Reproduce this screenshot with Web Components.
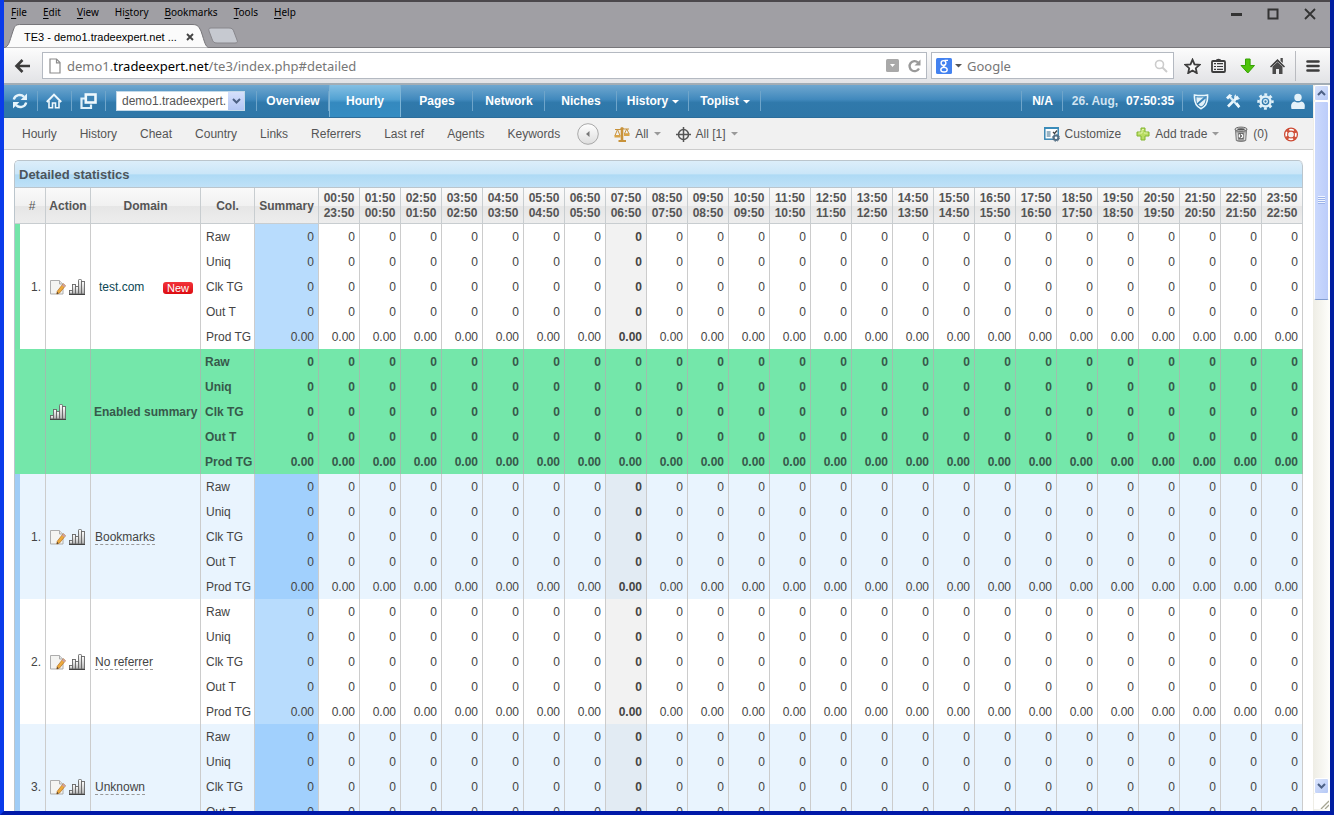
<!DOCTYPE html>
<html lang="en">
<head>
<meta charset="utf-8">
<title>TE3 - demo1.tradeexpert.net</title>
<style>
html, body { margin: 0; height: 100%; }
body { font: 12px/15px "Liberation Sans", Arial, sans-serif; color: #444; overflow: hidden; }
</style>
</head>
<body>
<browser-window>
  <title-bar slot="chrome"></title-bar>
  <location-bar slot="chrome"></location-bar>
  <main-nav></main-nav>
  <sub-nav></sub-nav>
  <stats-panel heading="Detailed statistics"><stats-table></stats-table></stats-panel>
</browser-window>

<script>
const define = (name, html, setup) => customElements.define(name, class extends HTMLElement {
  connectedCallback() {
    if (this.shadowRoot) return;
    const root = this.attachShadow({ mode: "open" });
    root.innerHTML = typeof html === "function" ? html(this) : html;
    if (setup) setup(root, this);
  }
});

/* Icon set: [width, height, markup] */
const ICONS = {
  refresh: [16, 16, `<g fill="none" stroke="#e6f4fb" stroke-width="2.400"><path d="M1.800 6.500C3 1.500 9 .8 12 3.800"/><path d="M14.200 9.500C13 14.500 7 15.200 4 12.200"/></g><path d="M15 .6v6.400H8.600zM1 15.400V9h6.400z" fill="#e6f4fb"/>`],
  house: [16, 16, `<path d="M.8 9 8 1.600 15.200 9" fill="none" stroke="#eef8fd" stroke-width="2"/><path d="M3 8v6.800h3.500V10h3v4.800H13V8" fill="none" stroke="#eef8fd" stroke-width="1.600"/>`],
  windows: [17, 16, `<path d="M6 5.500H1.500V15H11v-3.500" fill="none" stroke="#dff1fa" stroke-width="2.200"/><rect x="5.800" y="1.500" width="9.700" height="8" fill="#3d83b4" stroke="#eef8fd" stroke-width="2.600"/>`],
  shield: [16, 17, `<path d="M1.500 2C5 2.600 11 2.600 14.500 2c.5 6.500-1 11.500-6.500 13.700C2.500 13.500 1 8.500 1.500 2z" fill="none" stroke="#e9f6fc" stroke-width="1.600"/><path d="M3.500 4.300c2.500.3 5 .3 7.200 0L3.900 10.500C3.500 8.500 3.400 6.500 3.500 4.300zM12.600 5.500C12.500 9 11.500 12 8 13.600 6.800 13 6 12.300 5.300 11.500z" fill="#e1f0f8"/>`],
  tools: [16, 16, `<path d="M3 13.500 13 3.500" stroke="#edf8fd" stroke-width="2.600"/><path d="M4 3l9.500 10.500" stroke="#d6ebf6" stroke-width="2.200" fill="none"/><path d="M1 4.500 4.500 1l2.800 1.600L3 6.600zM11 1.300c-2 1-2.400 3.200-1 4.600s4 1 5-1l-2.600.4-1.600-1.500zM10.500 11l1.800-1.800 3 4-2 2z" fill="#edf8fd"/>`],
  gear: [17, 17, `<circle cx="8.500" cy="8.500" r="7" fill="none" stroke="#e0f1f9" stroke-width="2.400" stroke-dasharray="2.900 2.598" stroke-dashoffset="1.450"/><circle cx="8.500" cy="8.500" r="5" fill="none" stroke="#e0f1f9" stroke-width="2.400"/><circle cx="8.500" cy="8.500" r="1.800" fill="none" stroke="#e0f1f9" stroke-width="1.300"/>`],
  person: [16, 17, `<circle cx="8" cy="4.400" r="3.700" fill="#e4f2f9"/><path d="M1.500 16C.4 11 2 9.200 4.700 8.500c1.900 1.400 4.700 1.400 6.600 0C14 9.200 15.600 11 14.500 16z" fill="#e4f2f9"/>`],
  scales: [16, 16, `<g fill="none" stroke="#c8923a"><path d="M8 1.500V14" stroke-width="2.600"/><path d="M1 3.500h5.500l1-1.500h1l1 1h5.500" stroke-width="1.200"/><path d="M3.500 3.500 1 9.500h5zM12.700 3l-2.400 5h4.800z"/><path d="M4.500 15h7.500" stroke-width="2"/></g><path d="M.5 9h6v2.500h-6zM10 7.500h5.500V10H10z" fill="#d8a347"/>`],
  target: [15, 15, `<g fill="none" stroke="#555" stroke-width="1.500"><circle cx="7.500" cy="7.500" r="5"/><path d="M7.500 0v15M0 7.500h15"/></g>`],
  back: [22, 22, `<defs><linearGradient id="g" x2="0" y2="1"><stop stop-color="#fff"/><stop offset="1" stop-color="#ddd"/></linearGradient></defs><circle cx="11" cy="11" r="10.300" fill="url(#g)" stroke="#a9a9a9"/><path d="M12.500 8v6l-3.500-3z" fill="#777"/>`],
  customize: [16, 16, `<rect x=".8" y="1.800" width="13.400" height="11.400" fill="#fff" stroke="#2f7fae" stroke-width="1.400"/><path d="M0 1h15v2H0z" fill="#3a8cba"/><path d="M2.500 5h4.500v6H2.500z" fill="#c3d4df"/><path d="M3 6h3M3 8h3M3 10h3" stroke="#7394a8"/><path d="m9 6 1.500 1.500L13 4.500" fill="none" stroke="#444" stroke-width="1.300"/><circle cx="12" cy="11.800" r="2.300" fill="#fff" stroke="#557186" stroke-width="2"/><circle cx="12" cy="11.800" r="3.500" fill="none" stroke="#557186" stroke-dasharray="1.400 1.350"/>`],
  plus: [14, 14, `<path d="M5 1h4v4h4v4H9v4H5V9H1V5h4z" fill="#b9dd62" stroke="#82b52e"/><path d="M6 2.500h2M2.500 6H6V3M8 6h3.500" fill="none" stroke="#e3f5ad"/>`],
  trash: [14, 16, `<path d="M1.500 3.500h11l-.8 11c-2 1.200-7.400 1.200-9.400 0z" fill="#9d9d9d" stroke="#777"/><path d="M3 6.500l.5 7.500M11 6.500l-.5 7.500" stroke="#d8d8d8" stroke-width="1.200"/><ellipse cx="7" cy="3.200" rx="6" ry="2.100" fill="#ddd" stroke="#666"/><ellipse cx="7" cy="3.200" rx="3.800" ry="1" fill="#555"/><path d="M4.500 7h5v6h-5z" fill="#666"/><circle cx="7" cy="10" r="1.700" fill="none" stroke="#fff" stroke-width="1.200" stroke-dasharray="2.700 .86"/>`],
  lifebuoy: [16, 16, `<circle cx="8" cy="8.500" r="4.900" fill="none" stroke="#fff" stroke-width="3.400"/><circle cx="8" cy="8.500" r="4.900" fill="none" stroke="#d4553c" stroke-width="3" stroke-dasharray="3 4.697" stroke-dashoffset="-2.350"/><circle cx="8" cy="8.500" r="6.400" fill="none" stroke="#cc4b35" stroke-width="1.300"/><circle cx="8" cy="8.500" r="3.400" fill="none" stroke="#cc4b35" stroke-width="1.100"/>`],
  arrowLeft: [17, 14, `<path d="M16 7H3M8.500 1 2.500 7l6 6" fill="none" stroke="#3c3c3c" stroke-width="2.600"/>`],
  page: [12, 16, `<path d="M1 1h6.500L11 4.500V15H1z" fill="#fff" stroke="#8b8b8b" stroke-width="1.200"/><path d="M7.500 1v3.800H11" fill="none" stroke="#8b8b8b" stroke-width="1.200"/>`],
  drop: [13, 13, `<rect width="13" height="13" rx="1.500" fill="#a9a9a9"/><path d="M4 5h5l-2.500 3z" fill="#fff"/>`],
  reload: [15, 14, `<path d="M12 9.500A5 5 0 1 1 11 3.500" fill="none" stroke="#999" stroke-width="2.300"/><path d="M13.500.5v6h-6z" fill="#999"/>`],
  engine: [16, 16, `<rect width="16" height="16" rx="1.500" fill="#4382f0"/><g fill="none" stroke="#fff" stroke-width="1.400"><circle cx="7.500" cy="5" r="2.400"/><ellipse cx="8" cy="11.700" rx="3.200" ry="2.300"/><path d="M8.500 2.400H12M9 7c-2.600.7-2.300 1.700.2 2.400"/></g>`],
  lens: [14, 14, `<circle cx="5.500" cy="5.500" r="4" fill="none" stroke="#ccc" stroke-width="1.600"/><path d="m8.500 8.500 4.500 4.500" stroke="#ccc" stroke-width="2"/>`],
  star: [17, 16, `<path d="m8.500 1.700 2 4.600 5 .5-3.700 3.400 1 4.900-4.300-2.600-4.300 2.600 1-4.900L1.500 6.800l5-.5z" fill="#f8f8f8" stroke="#3d3d3d" stroke-width="1.800"/>`],
  clipboard: [15, 15, `<rect x="1" y="3" width="13" height="11" rx="1" fill="none" stroke="#3d3d3d" stroke-width="1.800"/><path d="M4.500 3C5 0 10 0 10.500 3z" fill="#3d3d3d"/><path d="M3 5.700h2M6 5.700h6M3 8.500h2M6 8.500h6M3 11.300h2M6 11.300h6" stroke="#3d3d3d" stroke-width="1.200"/>`],
  download: [16, 16, `<path d="M5.500 1h4.600v6.500h4.400L7.800 15 1 7.500h4.500z" fill="#4fc40b" stroke="#36a006"/>`],
  home: [15, 16, `<path d="M0 8.500 7.500 1 15 8.500l-1 1L7.500 3.500 1 9.500z" fill="#3d3d3d"/><path d="M2.500 8.500 7.500 4l5 4.500V16H9v-5H6v5H2.500zM10.500 0h2.300v5l-2.300-2z" fill="#4a4a4a"/>`],
  menu: [14, 14, `<path d="M1.500 2.500h11M1.500 7h11M1.500 11.500h11" stroke="#3d3d3d" stroke-width="2.600" stroke-linecap="round"/>`],
  min: [12, 12, `<path d="M1 6.500h11" stroke="#333" stroke-width="3"/>`],
  max: [12, 12, `<path d="M1.500 1.500h9v9h-9z" fill="none" stroke="#333" stroke-width="2"/>`],
  close: [12, 12, `<path d="m1 1 10 10M11 1 1 11" stroke="#333" stroke-width="1.800"/>`],
  tabclose: [8, 8, `<path d="m1 1 6 6M7 1 1 7" stroke="#444" stroke-width="1.900"/>`],
  caret: [7, 4, `<path d="M0 0h7L3.500 3.600z" fill="currentColor"/>`],
  edit: [16, 16, `<path d="M.5 1.500h9L13 5v10H.5z" fill="#f4f4f2" stroke="#adadad"/><path d="M9.500 1.500V5H13" fill="#e4e4e4" stroke="#adadad"/><path d="m13.200 4.700 2.300 2-6 7.300-2.700 1 .5-2.800z" fill="#eeab3c" stroke="#b9762a" stroke-width=".8"/><path d="m13.200 4.700 2.300 2-1.200 1.500-2.300-2z" fill="#c9a0a8"/><path d="m6.800 15 .4-2 1.300 1.200z" fill="#333"/>`],
  chart: [16, 16, `<defs><linearGradient id="b" x2="0" y2="1"><stop stop-color="#fff"/><stop offset="1" stop-color="#b0b0b0"/></linearGradient></defs><g fill="url(#b)" stroke="#666" stroke-width=".9"><rect x=".5" y="11.500" width="3" height="3.500"/><rect x="3.500" y="5.500" width="3" height="9.500"/><rect x="6.500" y="7.500" width="3" height="7.500"/><rect x="9.500" y=".5" width="3" height="14.500" rx=".8"/><rect x="12.500" y="2.500" width="3" height="12.500"/></g><path d="M0 15.500h16" stroke="#444"/>`],
  chevUp: [9, 6, `<path d="m1 5 3.500-3.500L8 5" fill="none" stroke="#4d6185" stroke-width="2"/>`],
  chevDown: [9, 6, `<path d="m1 1 3.500 3.500L8 1" fill="none" stroke="#4d6185" stroke-width="2"/>`],
  grip: [9, 9, `<path d="M1 9 9 1M5 9l4-4" stroke="#a5a592" stroke-width="1.300"/>`]
};
define("ui-icon", el => {
  const [w, h, body] = ICONS[el.getAttribute("name")];
  return `<style>:host{display:inline-flex;flex:none}svg{display:block}</style>
  <svg width="${w}" height="${h}" viewBox="0 0 ${w} ${h}" aria-hidden="true">${body}</svg>`;
});
const icon = name => `<ui-icon name="${name}"></ui-icon>`;
const RESET = `*{box-sizing:border-box}button{font:inherit;color:inherit;background:none;border:0;padding:0;display:inline-flex;align-items:center}a{color:inherit;text-decoration:none}`;

define("browser-window", `
<style>
:host{display:grid;grid-template-rows:auto auto 1fr;height:100vh;box-sizing:border-box;border:solid #0831d9;border-width:0 4px 4px;border-color:#0831d9 #001ea0 #0019a8 #0a3bea;background:#fff}
.view{display:grid;grid-template-columns:1fr 17px;min-height:0}
.page{overflow:hidden;min-width:0}
</style>
<slot name="chrome"></slot>
<div class="view"><div class="page"><slot></slot></div><scroll-rail></scroll-rail></div>`);

define("title-bar", `
<style>${RESET}
:host{display:flex;justify-content:space-between;background:#a09fa4;border-top:2px solid #4b484c;border-bottom:1px solid #77767a;color:#000;font:10px/14px "Noto Sans",sans-serif;height:48px;box-sizing:border-box}
.menu{display:flex;gap:16px;padding:3px 7px 5px}
u{text-underline-offset:2px}
.tabs{display:flex}
.tab{display:grid;width:204px;height:24px}
.tab>*{grid-area:1/1}
.tab svg{display:block}
.label{display:flex;align-items:center;justify-content:space-between;padding:1px 16px 0 20px;font:11px/14px "Liberation Sans",sans-serif}
.controls{display:flex;gap:25px;padding:6px 14px;align-items:flex-start}
.new{align-self:flex-start;padding-top:3px}
</style>
<div>
  <nav class="menu"><button><span><u>F</u>ile</span></button><button><span><u>E</u>dit</span></button><button><span><u>V</u>iew</span></button><button><span>Hi<u>s</u>tory</span></button><button><span><u>B</u>ookmarks</span></button><button><span><u>T</u>ools</span></button><button><span><u>H</u>elp</span></button></nav>
  <div class="tabs">
    <div class="tab">
      <svg width="206" height="24" viewBox="0 0 206 24"><path d="M0 24C5 22 5 19 9 7 11 1 12 .5 17 .5H187C193 .5 194 1 197 7c4 12 4 15 8 17z" fill="#fbfbfb" stroke="#77767a"/></svg>
      <div class="label"><span>TE3 - demo1.tradeexpert.net ...</span><button aria-label="Close tab">${icon("tabclose")}</button></div>
    </div>
    <button class="new" aria-label="New tab"><svg width="30" height="17" viewBox="0 0 30 17"><path d="M3 1h18c3 0 4 1 5 4l3 8c1 2 0 3-2 3H9c-3 0-4-1-5-4L1 4C.5 2 1 1 3 1z" fill="#c6c9d0" stroke="#88878c"/></svg></button>
  </div>
</div>
<div class="controls"><button aria-label="Minimize">${icon("min")}</button><button aria-label="Maximize">${icon("max")}</button><button aria-label="Close">${icon("close")}</button></div>`);

define("location-bar", `
<style>${RESET}
:host{display:flex;align-items:center;height:37px;box-sizing:border-box;background:linear-gradient(#fcfcfc,#e2e3e6);border-bottom:2px solid #a3adb5;padding:0 10px 0 10px;color:#777;font:13px/18px "Noto Sans",sans-serif}
.field{display:flex;align-items:center;height:27px;background:#fff;border:1px solid #b4b9c1;min-width:0}
.url{flex:1;gap:6px;margin:0 4px 0 11px;padding:0 4px 0 6px}
.url div{flex:1;white-space:nowrap}b{font-weight:400;color:#000}
.url button+button{margin-left:2px}
.search{width:243px;padding:0 5px 0 4px;gap:3px;color:#555}
input{font:13px/18px "Noto Sans",sans-serif;color:#777;border:0;padding:0 0 0 2px;flex:1;min-width:0;background:none}
input::placeholder{color:#777;opacity:1}
.tools{display:flex;align-items:center;padding-left:10px;gap:10px}
.tools button:nth-child(3){padding:0 4px}
.menu{border-left:1px solid #b9bbc0;padding-left:10px;height:30px}
</style>
<button aria-label="Back">${icon("arrowLeft")}</button>
<div class="field url">${icon("page")}<div>demo1.<b>tradeexpert.net</b>/te3/index.php#detailed</div><button aria-label="History">${icon("drop")}</button><button aria-label="Reload">${icon("reload")}</button></div>
<div class="field search">${icon("engine")}${icon("caret")}<input type="text" placeholder="Google" aria-label="Search">${icon("lens")}</div>
<div class="tools"><button aria-label="Bookmark">${icon("star")}</button><button aria-label="Bookmarks list">${icon("clipboard")}</button><button aria-label="Downloads">${icon("download")}</button><button aria-label="Home">${icon("home")}</button><button class="menu" aria-label="Menu">${icon("menu")}</button></div>`);

define("main-nav", `
<style>${RESET}
:host{display:flex;height:33px;background:linear-gradient(#6fa7cf,#4189bd 45%,#3079ab 55%,#2f77a8);color:#fff;font-weight:700;border-bottom:1px solid #2b6d9b;box-sizing:border-box}
.sep{position:relative;display:flex;align-items:center;justify-content:center;padding:1px 0 0}
.sep::after{content:"";position:absolute;right:0;top:6px;bottom:6px;width:1px;background:#6fa5ca}
.ico{width:34px;padding:0 2px 0 0}
.pick{padding:0 12px 0 10px;width:151px;justify-content:flex-start}
.box{position:relative;display:flex;width:129px}
select{appearance:none;width:100%;height:20px;border:1px solid #c3d9e8;background:#fff;color:#555;font:12px/18px "Liberation Sans",sans-serif;padding:0 18px 0 5px;border-radius:0}
.box span{position:absolute;right:1px;top:1px;bottom:1px;width:16px;display:flex;align-items:center;justify-content:center;background:linear-gradient(#d5e0fc,#b3c6f4);pointer-events:none}
a.sep{width:72px;gap:4px}
a.on{background:linear-gradient(#84bfe3,#52a2d3 45%,#3489bf 55%,#348cc2);border:solid #7db4d6;border-width:0 1px}
a.on::after{display:none}
.right{margin-left:auto;display:flex}
.na{width:41px}.lead{width:1px}
.time{width:120px;gap:8px}.time span{color:#d2e4f1}
.set{display:flex;gap:16px;padding:0 7px 0 10px}
</style>
<button class="sep ico" aria-label="Refresh">${icon("refresh")}</button><button class="sep ico" aria-label="Start page">${icon("house")}</button><button class="sep ico" aria-label="New window">${icon("windows")}</button>
<div class="sep pick"><div class="box"><select aria-label="Site"><option>demo1.tradeexpert.</option></select><span>${icon("chevDown")}</span></div></div>
<a class="sep" href="#overview">Overview</a><a class="sep on" href="#hourly">Hourly</a><a class="sep" href="#pages">Pages</a><a class="sep" href="#network">Network</a><a class="sep" href="#niches">Niches</a><a class="sep" href="#history">History${icon("caret")}</a><a class="sep" href="#toplist">Toplist${icon("caret")}</a>
<div class="right"><div class="sep lead"></div><div class="sep na">N/A</div><div class="sep time"><span>26. Aug,</span><time>07:50:35</time></div>
<div class="set"><button aria-label="Security">${icon("shield")}</button><button aria-label="Tools">${icon("tools")}</button><button aria-label="Settings">${icon("gear")}</button><button aria-label="Account">${icon("person")}</button></div></div>`);

define("sub-nav", `
<style>${RESET}
:host{display:flex;align-items:center;gap:23px;height:32px;box-sizing:border-box;background:#f1f1f1;border-bottom:1px solid #ccc;padding:1px 14px 0 18px;color:#555}
.group,.end{display:flex;align-items:center;gap:15px}
.group a,.end a{display:flex;align-items:center;gap:5px}
.group{margin-left:-6px}
.group ui-icon[name=caret],.end ui-icon[name=caret]{color:#999}
.end{margin-left:auto}
</style>
<a href="#h">Hourly</a><a href="#hi">History</a><a href="#ch">Cheat</a><a href="#co">Country</a><a href="#li">Links</a><a href="#re">Referrers</a><a href="#la">Last ref</a><a href="#ag">Agents</a><a href="#ke">Keywords</a>
<div class="group"><button aria-label="Collapse">${icon("back")}</button><a href="#all">${icon("scales")}All${icon("caret")}</a><a href="#all1">${icon("target")}All [1]${icon("caret")}</a></div>
<div class="end"><a href="#customize">${icon("customize")}Customize</a><a href="#add">${icon("plus")}Add trade${icon("caret")}</a><a href="#trash">${icon("trash")}(0)</a><a href="#help" aria-label="Help">${icon("lifebuoy")}</a></div>`);

define("stats-panel", el => `
<style>
:host{display:block;margin:10px 10px 0;border:solid #bbc5cc;border-width:1px 0 1px 1px;border-radius:5px 5px 0 0;overflow:hidden}
h2{margin:0;padding:6px 4px 5px;font:700 13px/15px "Liberation Sans",Arial,sans-serif;color:#4c555b;background:linear-gradient(#dceefa,#cbe6f8 48%,#aedaf5 54%,#bfe1f7);border:solid #bbc5cc;border-width:0 1px 1px 0;border-radius:0 5px 0 0}
</style>
<h2>${el.getAttribute("heading")}</h2><slot></slot>`);

const METRICS = ["Raw", "Uniq", "Clk TG", "Out T", "Prod TG"];
const GROUPS = [
  { n: "1.", kind: "green", domain: `<a class="plain" href="#test">test.com</a><mark>New</mark>` },
  { n: "", kind: "total", domain: "Enabled summary" },
  { n: "1.", kind: "blue alt", domain: `<a class="dash" href="#bookmarks">Bookmarks</a>` },
  { n: "2.", kind: "blue", domain: `<a class="dash" href="#noref">No referrer</a>` },
  { n: "3.", kind: "blue alt", domain: `<a class="dash" href="#unknown">Unknown</a>` }
];
const hh = n => String((n + 24) % 24).padStart(2, "0") + ":50";
const HOURS = Array.from({ length: 24 }, (_, i) => i);
const group = g => `<tbody class="${g.kind}">` + METRICS.map((m, i) => `<tr>` +
  (i ? "" : `<td rowspan="5" class="num">${g.n}</td><td rowspan="5" class="act"><div>${g.n ? `<button aria-label="Edit">${icon("edit")}</button>` : ""}<button aria-label="Chart">${icon("chart")}</button></div></td><td rowspan="5" class="dom"><div>${g.domain}</div></td>`) +
  `<td class="col">${m}</td><td class="sum">${i < 4 ? "0" : "0.00"}</td>` +
  HOURS.map(h => `<td${h === 7 ? ' class="now"' : ""}>${i < 4 ? "0" : "0.00"}</td>`).join("") + `</tr>`).join("") + `</tbody>`;

define("stats-table", `
<style>${RESET}
:host{display:block}
table{width:100%;table-layout:fixed;border-collapse:separate;border-spacing:0}
col.a{width:31px}col.b{width:45px}col.c{width:110px}col.d{width:54px}col.e{width:64px}
th{height:36px;padding:1px 0 0;font-weight:700;color:#555;white-space:nowrap;text-align:center;background:linear-gradient(#fafafa,#f1f1f1 50%,#e6e6e6 52%,#ededed);border:solid #c8cdd0;border-width:0 1px 1px 0}
th.n{font-weight:400;padding-left:4px}
td{height:25px;padding:2px 4px 0 0;text-align:right;border-right:1px solid #ccc}
td.num{border-left:5px solid #a0cdf6}
.green td.num{border-left-color:#74e5a9}
td.act{padding:0}
td.act div{display:flex;gap:3px;padding-left:4px}
td.dom{text-align:left;padding-left:4px;padding-right:3px;white-space:nowrap}
td.dom div{display:flex;align-items:center;justify-content:space-between}
td.col{text-align:left;padding-left:5px;white-space:nowrap;padding-right:0}
.sum{background:#b8dcfd}
.now{background:#f2f2f2;font-weight:700}
.alt td{background:#e9f4fe}
.alt td.sum{background:#a1d0fd}
.alt td.now{background:#e2ebf3}
.total td{background:#74e7aa;font-weight:700;border-right-color:#9ebfae;color:#37594a}
.total td.num{border-left-color:#74e7aa}
.total td.dom{padding-left:3px}
.total td.col{padding-left:4px}
.plain{color:#0c4654;padding-left:4px}
.dash{border-bottom:1px dashed #999;line-height:14px}
mark{background:linear-gradient(#f2333a,#dd0d12);color:#fff;border-radius:3px;font-size:11px;line-height:12px;padding:0 4px;margin-right:4px}
</style>
<table>
<colgroup><col class="a"><col class="b"><col class="c"><col class="d"><col class="e"><col span="24"></colgroup>
<thead><tr><th class="n">#</th><th>Action</th><th>Domain</th><th>Col.</th><th>Summary</th>${HOURS.map(h => `<th>${hh(h)}<br>${hh(h - 1)}</th>`).join("")}</tr></thead>
${GROUPS.map(group).join("")}
</table>`);

define("scroll-rail", `
<style>${RESET}
:host{display:flex;flex-direction:column;background:linear-gradient(90deg,#eeede5,#fefefb);padding:0 1px 2px}
button{width:15px;height:16px;justify-content:center;border:1px solid #fff;border-radius:2px;background:linear-gradient(135deg,#dbe5fd,#b5c8f5);flex:none}
.thumb{height:calc(28% - 4px);background:linear-gradient(90deg,#cbd9fd,#bccdfa);border:1px solid #fff;border-bottom:1px solid #7f9bd0;border-radius:2px;display:flex;align-items:center;justify-content:center}
.thumb i{width:7px;height:8px;background:repeating-linear-gradient(#f0f5ff 0 1px,#9db4ea 1px 2px)}
.down{margin-top:auto}
.corner{display:flex;justify-content:flex-end;align-items:flex-end;height:15px;background:#fff}
</style>
<button aria-label="Scroll up">${icon("chevUp")}</button><div class="thumb"><i></i></div><button class="down" aria-label="Scroll down">${icon("chevDown")}</button><div class="corner">${icon("grip")}</div>`);
</script>
</body>
</html>
